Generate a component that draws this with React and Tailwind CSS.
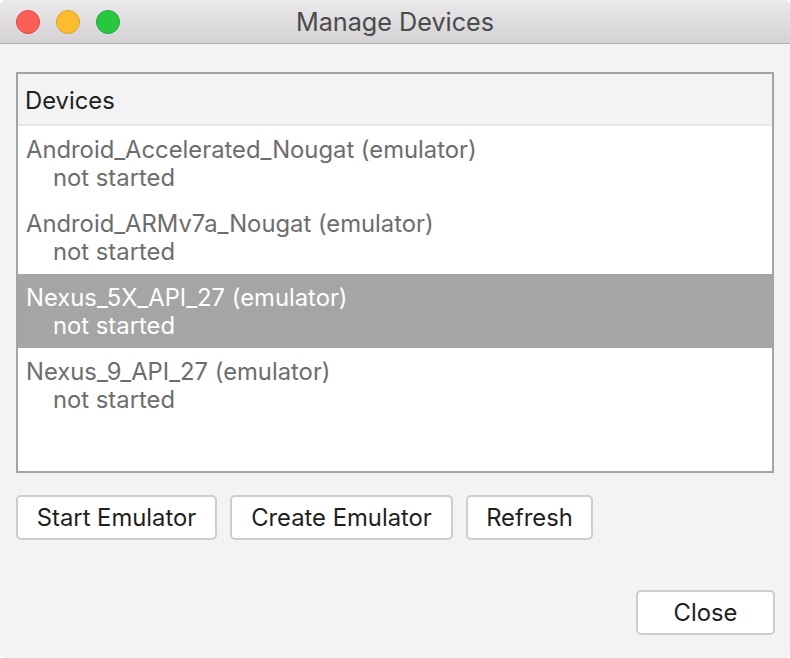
export default function App() {
  const devices = [
    { name: "Android_Accelerated_Nougat (emulator)", sel: false },
    { name: "Android_ARMv7a_Nougat (emulator)", sel: false },
    { name: "Nexus_5X_API_27 (emulator)", sel: true },
    { name: "Nexus_9_API_27 (emulator)", sel: false },
  ];
  const font = { fontFamily: "Inter, 'Noto Sans', sans-serif" };
  return (
    <div className="w-[790px] h-[658px] bg-white" style={font}>
      <div className="w-full h-full rounded-[6px] overflow-hidden bg-[#f3f3f3] flex flex-col">
        <div className="h-[44px] shrink-0 bg-gradient-to-b from-[#ebe9eb] to-[#d4d2d4] border-b border-[#b3b3b3] relative flex items-center justify-center pt-[2px]">
          <div className="absolute left-[16px] top-[10px] flex gap-[16px]">
            <div className="w-[24px] h-[24px] rounded-full bg-[#fc5f57] border border-[#df4b45]" />
            <div className="w-[24px] h-[24px] rounded-full bg-[#fdbc2e] border border-[#dea123]" />
            <div className="w-[24px] h-[24px] rounded-full bg-[#29c740] border border-[#1fa832]" />
          </div>
          <span className="text-[25.2px] text-[#4b4b4b] leading-none">Manage Devices</span>
        </div>
        <div className="px-[16px] pt-[28px]">
          <div className="h-[401px] border-2 border-[#a3a3a3] bg-white flex flex-col">
            <div className="h-[52px] shrink-0 bg-[#f3f3f3] border-b-2 border-[#e7e7e7] flex items-center pl-[7px] pt-[4px]">
              <span className="text-[23.8px] text-[#1f1f1f]">Devices</span>
            </div>
            {devices.map((d) => (
              <div
                key={d.name}
                className={
                  "h-[74px] shrink-0 pl-[8px] pt-[10px] " +
                  (d.sel ? "bg-[#a5a5a5] text-white" : "text-[#6d6d6d]")
                }
              >
                <div className="text-[23.8px] leading-[28px] whitespace-nowrap">{d.name}</div>
                <div className="text-[23.8px] leading-[28px] pl-[27px] whitespace-nowrap">not started</div>
              </div>
            ))}
          </div>
          <div className="mt-[22px] flex gap-[13px]">
            <button className="w-[201px] h-[45px] rounded-[5px] border-2 border-[#cdcdcd] bg-white text-[23.8px] text-[#1f1f1f]">Start Emulator</button>
            <button className="w-[223px] h-[45px] rounded-[5px] border-2 border-[#cdcdcd] bg-white text-[23.8px] text-[#1f1f1f]">Create Emulator</button>
            <button className="w-[127px] h-[45px] rounded-[5px] border-2 border-[#cdcdcd] bg-white text-[23.8px] text-[#1f1f1f]">Refresh</button>
          </div>
          <div className="mt-[50px] flex justify-end mr-[-1px]">
            <button className="w-[139px] h-[45px] rounded-[5px] border-2 border-[#cdcdcd] bg-white text-[23.8px] text-[#1f1f1f]">Close</button>
          </div>
        </div>
      </div>
    </div>
  );
}
